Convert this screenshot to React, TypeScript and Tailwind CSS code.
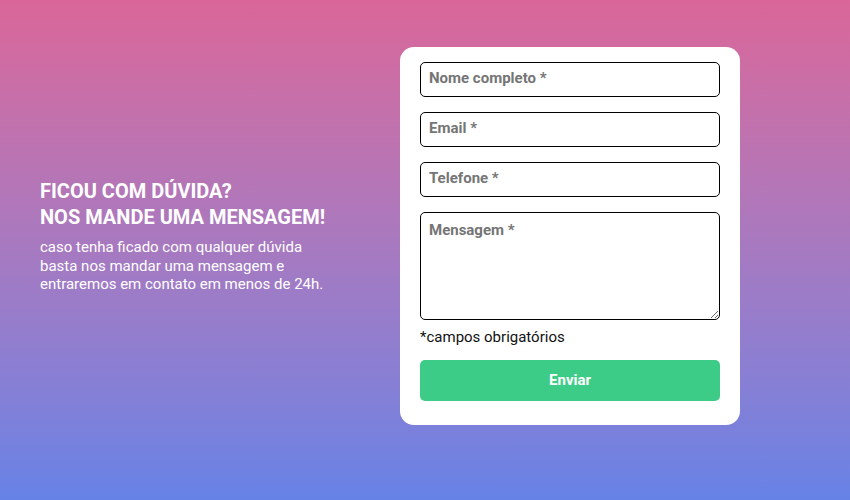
export default function App() {
  const fields = ["Nome completo *", "Email *", "Telefone *"];
  return (
    <div className="flex h-[500px] w-full items-center bg-gradient-to-b from-[#da6699] to-[#6682e6] px-10 pb-[28px] font-['Roboto',sans-serif]">
      <div className="w-[360px] text-white">
        <h2 className="text-[20px] font-bold uppercase leading-[26px]">
          Ficou com dúvida?
          <br />
          Nos mande uma mensagem!
        </h2>
        <p className="mt-[8px] text-[15px] leading-[18.5px]">
          caso tenha ficado com qualquer dúvida
          <br />
          basta nos mandar uma mensagem e
          <br />
          entraremos em contato em menos de 24h.
        </p>
      </div>
      <form className="flex w-[340px] flex-col rounded-[14px] bg-white px-5 pt-[15px] pb-6">
        {fields.map((f) => (
          <input
            key={f}
            placeholder={f}
            className="mb-[15px] h-[35px] w-full rounded-[5px] border border-black px-[8px] pb-[3px] text-[15px] font-bold outline-none placeholder:text-[#757575]"
          />
        ))}
        <textarea
          placeholder="Mensagem *"
          className="h-[108px] w-full rounded-[5px] border border-black px-[8px] py-[6px] text-[15px] font-bold outline-none placeholder:text-[#757575]"
        />
        <p className="mt-[6px] text-[15px] text-[#111]">*campos obrigatórios</p>
        <button
          type="button"
          className="mt-[11px] h-[41px] w-full rounded-[5px] bg-[#3ccc88] text-[15px] font-bold text-white"
        >
          Enviar
        </button>
      </form>
    </div>
  );
}
